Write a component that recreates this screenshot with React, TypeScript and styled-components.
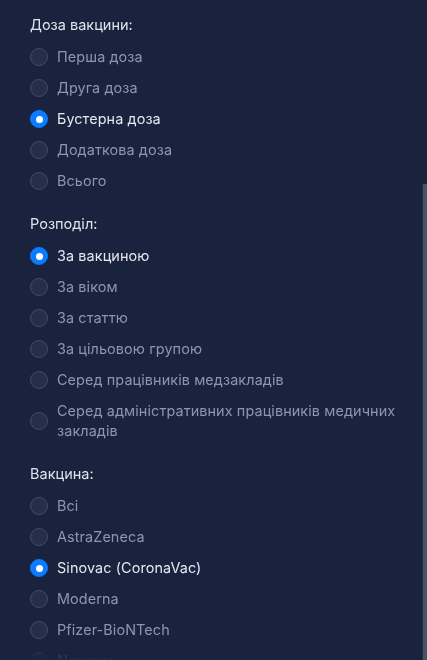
import React from 'react'
import styled, { createGlobalStyle } from 'styled-components';

const GlobalStyle = createGlobalStyle`
  html, body {
    margin: 0;
    padding: 0;
    background: #19233e;
  }
  body {
    font-family: Inter, "Noto Sans", sans-serif;
    -webkit-font-smoothing: antialiased;
  }
`

type Option = { label: string; checked?: boolean }

const sections: { title: string; options: Option[] }[] = [
  {
    title: 'Доза вакцини:',
    options: [
      { label: 'Перша доза' },
      { label: 'Друга доза' },
      { label: 'Бустерна доза', checked: true },
      { label: 'Додаткова доза' },
      { label: 'Всього' },
    ],
  },
  {
    title: 'Розподіл:',
    options: [
      { label: 'За вакциною', checked: true },
      { label: 'За віком' },
      { label: 'За статтю' },
      { label: 'За цільовою групою' },
      { label: 'Серед працівників медзакладів' },
      { label: 'Серед адміністративних працівників медичних закладів' },
    ],
  },
  {
    title: 'Вакцина:',
    options: [
      { label: 'Всі' },
      { label: 'AstraZeneca' },
      { label: 'Sinovac (CoronaVac)', checked: true },
      { label: 'Moderna' },
      { label: 'Pfizer-BioNTech' },
      { label: 'Novavax' },
    ],
  },
]

function App() {
  return (
    <>
      <GlobalStyle />
      <Panel>
        <Content>
          {sections.map((s) => (
            <Section key={s.title}>
              <Heading>{s.title}</Heading>
              <List>
                {s.options.map((o) => (
                  <Row key={o.label}>
                    <Radio $checked={!!o.checked} />
                    <Label $checked={!!o.checked}>{o.label}</Label>
                  </Row>
                ))}
              </List>
            </Section>
          ))}
        </Content>
        <Thumb />
      </Panel>
    </>
  )
}

export default App;

const Panel = styled.div`
  position: relative;
  height: 660px;
  overflow: hidden;
  background: #19233e;
`

const Content = styled.div`
  padding: 14.5px 30px 0 30px;
  display: flex;
  flex-direction: column;
  gap: 17px;
  -webkit-mask-image: linear-gradient(to bottom, #000 638px, rgba(0,0,0,0.06) 660px);
  mask-image: linear-gradient(to bottom, #000 638px, rgba(0,0,0,0.06) 660px);
`

const Section = styled.div`
  display: flex;
  flex-direction: column;
`

const Heading = styled.div`
  font-size: 14.5px;
  line-height: 20px;
  color: #dfe3ea;
  margin-bottom: 7px;
`

const List = styled.div`
  display: flex;
  flex-direction: column;
`

const Row = styled.label`
  display: flex;
  align-items: center;
  gap: 9px;
  padding: 5.5px 0;
`

const Radio = styled.span<{ $checked: boolean }>`
  flex: none;
  width: 18px;
  height: 18px;
  box-sizing: border-box;
  border-radius: 50%;
  position: relative;
  background: ${(p) => (p.$checked ? '#0a7cff' : '#262f47')};
  border: 1.5px solid ${(p) => (p.$checked ? '#0a7cff' : '#414c61')};

  &::after {
    content: '';
    display: ${(p) => (p.$checked ? 'block' : 'none')};
    position: absolute;
    left: 50%;
    top: 50%;
    width: 7px;
    height: 7px;
    margin: -3.5px 0 0 -3.5px;
    border-radius: 50%;
    background: #fff;
  }
`

const Label = styled.span<{ $checked: boolean }>`
  font-size: 14.4px;
  line-height: 20px;
  letter-spacing: 0.1px;
  color: ${(p) => (p.$checked ? '#e4e8ee' : '#8e97a9')};
`

const Thumb = styled.div`
  position: absolute;
  right: 0;
  top: 184px;
  bottom: 0;
  width: 4px;
  background: #4a5364;
  border-left: 1px solid #222c44;
`
